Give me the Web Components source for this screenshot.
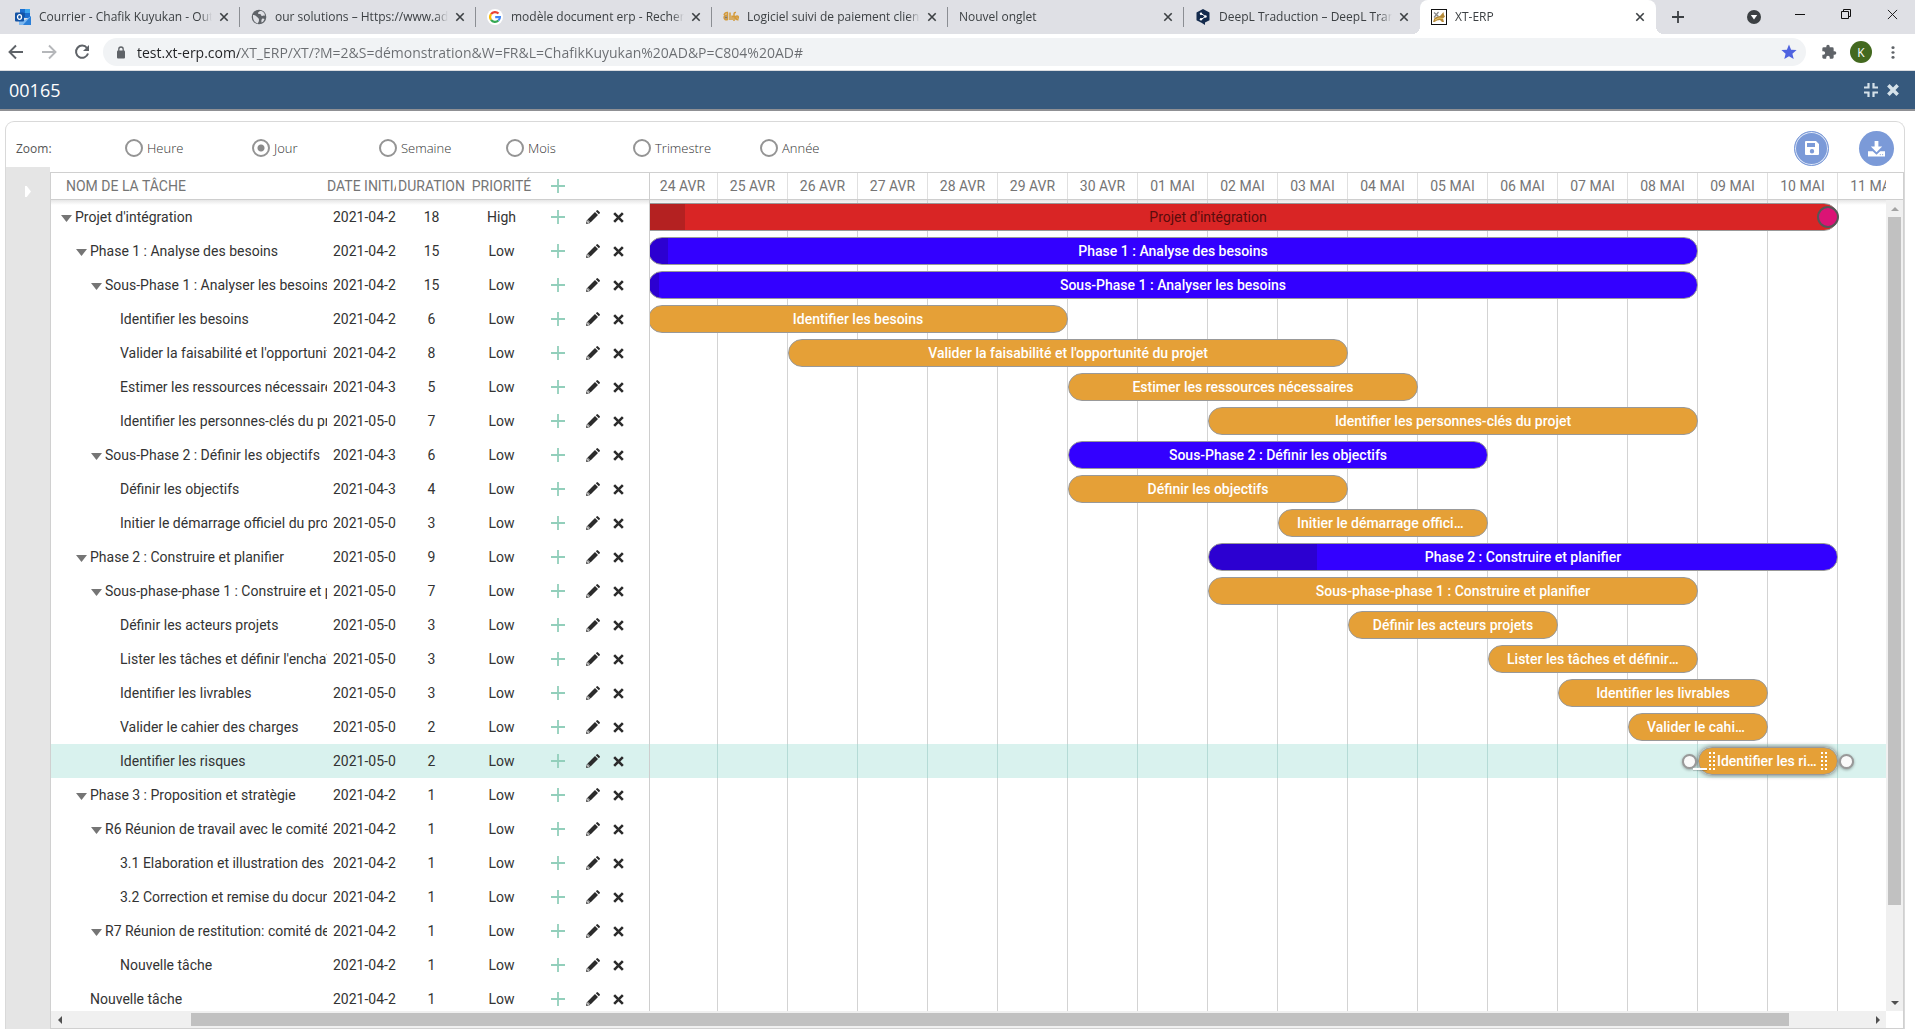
<!DOCTYPE html>
<html lang="fr">
<head>
<meta charset="utf-8">
<title>XT-ERP</title>
<style>
html,body{height:100%}
body{margin:0;display:flex;flex-direction:column;overflow:hidden;background:#fff;font-family:"Open Sans","Noto Sans",sans-serif;color:#333}
gantt-panel{flex:1;min-height:0}
</style>
</head>
<body>
<browser-tabs>
  <browser-tab icon="outlook">Courrier - Chafik Kuyukan - Outlook</browser-tab>
  <browser-tab icon="globe">our solutions – Https://www.adlesse.com</browser-tab>
  <browser-tab icon="google">modèle document erp - Recherche Google</browser-tab>
  <browser-tab icon="life">Logiciel suivi de paiement client, gestion</browser-tab>
  <browser-tab>Nouvel onglet</browser-tab>
  <browser-tab icon="deepl" last>DeepL Traduction – DeepL Translate</browser-tab>
  <browser-tab icon="xt" active>XT-ERP</browser-tab>
</browser-tabs>
<address-bar></address-bar>
<app-titlebar>00165</app-titlebar>
<gantt-panel>
  <zoom-bar slot="tools"></zoom-bar>
  <task-grid slot="grid"></task-grid>
  <task-timeline slot="timeline"></task-timeline>
</gantt-panel>

<script>
const ICONS = {
  outlook:['0 0 16 16','<path d="M5 0h10v9H5z" fill="#1b6fd0"/><path d="M10 0h5v4h-5z" fill="#3ba5ee"/><path d="M5 4h5v4H5z" fill="#1058a8"/><path d="M4 8l6 3 6-4v9H4z" fill="#7db8f0"/><path d="M16 7v9H8z" fill="#2a7fd8"/><rect y="3.500" width="9" height="9" rx="1" fill="#1253a5"/><ellipse cx="4.500" cy="8" rx="2" ry="2.300" fill="none" stroke="#fff" stroke-width="1.300"/>'],
  globe:['0 0 16 16','<circle cx="8" cy="8" r="7.300" fill="#5f6368"/><path d="M2 6c2 0 3 1 4 2s2 1 2 3-1 2-1 3.500C4 14 2 11 2 8zM9 2c-1 1-2 1-2 2s1 1 2 1 1 2 2 2 2-1 3 0c0-3-2-5-5-5zM11 10c1-1 2 0 2.500 0-.5 1.500-1.500 3-3 3.500 0-1.500-.5-2.500.5-3.500z" fill="#dfe0e5"/>'],
  google:['0 0 16 16','<circle cx="8" cy="8" r="8" fill="#fff"/><g fill="none" stroke-width="2.200"><path d="M4 5.200A4.900 4.900 0 0 1 11.500 4.600" stroke="#ea4335"/><path d="M4 5.200A4.900 4.900 0 0 0 4 10.800" stroke="#fbbc05"/><path d="M4 10.800A4.900 4.900 0 0 0 11.400 11.500" stroke="#34a853"/><path d="M11.400 11.500A4.900 4.900 0 0 0 12.900 8.200H8.200" stroke="#4285f4"/></g>'],
  life:['0 0 16 16','<g fill="none" stroke="#d49a3a" stroke-width="1.500"><path d="M4.500 6.500A2.300 2.300 0 1 0 4.500 10.500M4.500 3.500V11M1 6q1-3 4-2.500M7 3.500V11M9 6.500V11M11 12V5.500q0-2.500 2-2M9.500 7.500h3.500M12.500 9h3q0-2-1.500-2t-1.500 2 3 1.700"/></g><circle cx="3" cy="8.500" r="1.200" fill="#8a7a60"/>'],
  deepl:['0 0 16 16','<path d="M8 0l6.500 3.500v7.700L10 13.500V16l-3.500-2.300-5-2.500V3.500z" fill="#142b4d"/><path d="M6 4.500l4.500 3-4.500 3" fill="none" stroke="#fff"/><g fill="#fff"><circle cx="6" cy="4.700" r="1.200"/><circle cx="10.500" cy="7.500" r="1.200"/><circle cx="6" cy="10.300" r="1.200"/></g>'],
  xt:['0 0 16 16','<rect x=".5" y=".5" width="15" height="15" fill="#fff" stroke="#111"/><path d="M2 13l1.500-4L6 7.500 9 7l3.500-4 .5 3 1 1.500-2 2 1 3.500h-2l-2-2-3 .5L3.500 13z" fill="#b58a3a"/><path d="M3 3.500l4.500 4M7.500 3L3 8.500" stroke="#888" stroke-width="1.200"/><path d="M4 11l4-2 4 .5" stroke="#e8ca6e" fill="none"/>'],
  close:['0 0 10 10','<path d="M1.300 1.300l7.400 7.400M8.700 1.300L1.300 8.700" stroke="currentColor" stroke-width="1.600"/>'],
  thinclose:['0 0 12 12','<path d="M1 1l10 10M11 1L1 11" stroke="currentColor"/>'],
  newtab:['0 0 12 12','<path d="M6 0v12M0 6h12" stroke="currentColor" stroke-width="1.800"/>'],
  guest:['0 0 14 14','<circle cx="7" cy="7" r="7" fill="#3c4043"/><path d="M3.800 5h6.400L7 9.500z" fill="#fff"/>'],
  minimize:['0 0 12 12','<path d="M1 6.500h10" stroke="currentColor"/>'],
  restore:['0 0 12 12','<path d="M1.500 3.500h7v7h-7zM3.500 3.500v-2h7v7h-2" fill="none" stroke="currentColor"/>'],
  back:['0 0 16 16','<path d="M15 8H2M8 1.500L1.500 8 8 14.500" fill="none" stroke="currentColor" stroke-width="1.900"/>'],
  forward:['0 0 16 16','<path d="M1 8h13M8 1.500L14.500 8 8 14.500" fill="none" stroke="currentColor" stroke-width="1.900"/>'],
  reload:['0 0 16 16','<path d="M13 4A6.100 6.100 0 1 0 14 9.500" fill="none" stroke="currentColor" stroke-width="2"/><path d="M15 1v6H9z" fill="currentColor"/>'],
  lock:['0 0 10 13','<rect x="1" y="4.500" width="8" height="8" rx="1" fill="currentColor"/><path d="M2.800 5V3.200a2.200 2.200 0 0 1 4.400 0V5" fill="none" stroke="currentColor" stroke-width="1.300"/>'],
  star:['0 0 16 16','<path d="M8 .6l2.100 5.100 5.500.4-4.200 3.600 1.300 5.400L8 12.200l-4.700 2.900 1.300-5.400L.4 6.100l5.500-.4z" fill="currentColor"/>'],
  puzzle:['0 0 24 24','<path d="M20.500 11H19V7a2 2 0 0 0-2-2h-4V3.500a2.500 2.500 0 0 0-5 0V5H4a2 2 0 0 0-2 2v3.800h1.500a2.700 2.700 0 0 1 0 5.400H2V20c0 1.100.9 2 2 2h3.800v-1.500a2.700 2.700 0 0 1 5.400 0V22H17a2 2 0 0 0 2-2v-4h1.500a2.500 2.500 0 0 0 0-5z" fill="currentColor"/>'],
  dots:['0 0 4 16','<circle cx="2" cy="2" r="1.600"/><circle cx="2" cy="8" r="1.600"/><circle cx="2" cy="14" r="1.600"/>'],
  compress:['0 0 16 16','<path d="M5.500 1v4.500H1M10.500 1v4.500H15M5.500 15v-4.500H1M10.500 15v-4.500H15" fill="none" stroke="currentColor" stroke-width="2.200"/>'],
  times:['0 0 12 12','<path d="M2 2l8 8M10 2l-8 8" stroke="currentColor" stroke-width="3"/>'],
  cross:['0 0 12 12','<path d="M2 2l8 8M10 2l-8 8" stroke="currentColor" stroke-width="2.400"/>'],
  plus:['0 0 14 14','<path d="M7 0v14M0 7h14" stroke="currentColor" stroke-width="1.800"/>'],
  pencil:['0 0 14 14','<path d="M9.800 1.200l3 3 .8-.8q.7-.7 0-1.400L12 .4q-.7-.7-1.400 0zM9 2l3 3-7.500 7.500-3-3z" fill="currentColor"/><path d="M1.300 10L.4 13.600 4 12.700z" fill="#fff" stroke="currentColor" stroke-width=".7"/><path d="M.4 13.600l.4-1.500 1.100 1.100z" fill="currentColor"/>'],
  caret:['0 0 11 7','<path d="M0 0h11L5.500 7z" fill="currentColor"/>'],
  side:['0 0 7 12','<path d="M0 0l2 0 5 6-5 6-2 0z" fill="currentColor"/>'],
  save:['0 0 16 16','<path fill-rule="evenodd" d="M2 1h10l3 3v10a1 1 0 0 1-1 1H2a1 1 0 0 1-1-1V2a1 1 0 0 1 1-1zm1 2v4h8V3zm5 6a2.200 2.200 0 1 0 0 4.400A2.200 2.200 0 0 0 8 9z" fill="currentColor"/>'],
  download:['0 0 18 18','<path d="M7 1h4v6h4l-6 6-6-6h4z" fill="currentColor"/><path d="M0 12h5l4 3.500 4-3.500h5v5.500H0z" fill="currentColor"/><path d="M12.500 15.500h1M15 15.500h1" stroke="#7b9ad8"/>'],
  up:['0 0 8 5','<path d="M0 5l4-5 4 5z" fill="currentColor"/>'],
  down:['0 0 8 5','<path d="M0 0l4 5 4-5z" fill="currentColor"/>'],
  left:['0 0 5 8','<path d="M5 0L0 4l5 4z" fill="currentColor"/>'],
  right:['0 0 5 8','<path d="M0 0l5 4-5 4z" fill="currentColor"/>']
};

class Base extends HTMLElement{
  connectedCallback(){
    if(this.shadowRoot) return;
    this.attachShadow({mode:'open'}).innerHTML =
      `<style>*{box-sizing:border-box}button{border:0;padding:0;margin:0;background:none;color:inherit;font:inherit;display:inline-flex;align-items:center;justify-content:center;cursor:pointer}${this.css()}</style>${this.html()}`;
  }
}

customElements.define('ui-icon', class extends Base{
  css(){return `:host{display:inline-flex;flex:none}svg{display:block;width:${this.getAttribute('w')||16}px;height:${this.getAttribute('h')||this.getAttribute('w')||16}px}`}
  html(){const [box,body]=ICONS[this.getAttribute('name')];return `<svg viewBox="${box}" fill="currentColor" preserveAspectRatio="none" aria-hidden="true">${body}</svg>`}
});

customElements.define('browser-tabs', class extends Base{
  css(){return `
    :host{display:flex;height:34px;background:#dfe0e5;padding-left:4px;color:#3c4043}
    .end{display:flex;flex:1;justify-content:space-between}
    .new{width:44px}
    .win{display:flex}
    .win button{width:46px;height:28px;color:#111}
    .win .guest{height:34px}`}
  html(){return `<slot></slot><div class="end"><button class="new" aria-label="Nouvel onglet"><ui-icon name="newtab" w="12"></ui-icon></button>
    <div class="win"><button class="guest" aria-label="Rechercher"><ui-icon name="guest" w="14"></ui-icon></button><button aria-label="Réduire"><ui-icon name="minimize" w="12"></ui-icon></button><button aria-label="Restaurer"><ui-icon name="restore" w="12"></ui-icon></button><button aria-label="Fermer"><ui-icon name="thinclose" w="11"></ui-icon></button></div></div>`}
});

customElements.define('browser-tab', class extends Base{
  css(){return `
    :host{display:flex;align-items:center;width:236px;flex:0 1 236px;min-width:0;padding:0 8px 0 11px;box-sizing:border-box;position:relative;font-size:12px}
    :host(:not([active]):not([last]))::after{content:"";position:absolute;right:0;top:7px;height:20px;width:1px;background:#8b8e93}
    :host([active]){background:#fff;border-radius:8px 8px 0 0}
    :host([active])::before,:host([active])::after{content:"";position:absolute;bottom:0;width:8px;height:8px}
    :host([active])::before{left:-8px;background:radial-gradient(circle at 0 0,#0000 8px,#fff 8px)}
    :host([active])::after{right:-8px;background:radial-gradient(circle at 100% 0,#0000 8px,#fff 8px)}
    ui-icon{margin-right:8px}
    .t{flex:1;min-width:0;overflow:hidden;white-space:nowrap;line-height:20px;-webkit-mask-image:linear-gradient(90deg,#000 calc(100% - 12px),#0000)}
    button{width:16px;height:16px;margin-left:4px}button ui-icon{margin:0}`}
  html(){const i=this.getAttribute('icon');return `${i?`<ui-icon name="${i}" w="16"></ui-icon>`:''}<span class="t"><slot></slot></span><button aria-label="Fermer l'onglet"><ui-icon name="close" w="10"></ui-icon></button>`}
});

customElements.define('address-bar', class extends Base{
  css(){return `
    :host{display:flex;align-items:center;height:37px;box-sizing:border-box;border-bottom:1px solid #dadce0;padding:0 14px 0 8px;color:#5f6368}
    .nav{display:flex;width:95px;gap:17px;align-items:center}
    .fwd{color:#b5b7ba}
    .box{flex:1;display:flex;align-items:center;height:28px;border-radius:14px;background:#f1f3f5;padding:0 9px 0 13px;min-width:0}
    input{flex:1;min-width:0;margin:0 0 0 11px;padding:0;border:0;outline:0;height:28px;font:14px "Open Sans","Noto Sans",sans-serif;color:#5f6368;background:linear-gradient(90deg,#202124 102px,#6a6d71 102px);-webkit-background-clip:text;background-clip:text;-webkit-text-fill-color:#0000}
    .star{color:#4f63e0}
    .right{display:flex;align-items:center;margin-left:15px}
    .k{width:22px;height:22px;border-radius:11px;background:#43691f;color:#fff;font-size:12px;margin:0 13px 0 13px}
    .menu{width:16px}`}
  html(){return `<div class="nav"><button aria-label="Précédent"><ui-icon name="back" w="16"></ui-icon></button><button class="fwd" aria-label="Suivant"><ui-icon name="forward" w="16"></ui-icon></button><button aria-label="Actualiser"><ui-icon name="reload" w="16"></ui-icon></button></div>
    <div class="box"><ui-icon name="lock" w="10" h="13"></ui-icon><input type="text" aria-label="Adresse" value="test.xt-erp.com/XT_ERP/XT/?M=2&amp;S=démonstration&amp;W=FR&amp;L=ChafikKuyukan%20AD&amp;P=C804%20AD#"><button class="star" aria-label="Favori"><ui-icon name="star" w="16"></ui-icon></button></div>
    <div class="right"><button aria-label="Extensions"><ui-icon name="puzzle" w="16"></ui-icon></button><button class="k">K</button><button class="menu" aria-label="Menu"><ui-icon name="dots" w="4" h="13"></ui-icon></button></div>`}
});

customElements.define('app-titlebar', class extends Base{
  css(){return `
    :host{display:flex;align-items:center;justify-content:space-between;height:40px;box-sizing:border-box;background:#36597d;border-bottom:2px solid #8f9094;padding:0 15px 0 9px;color:#fff;font-size:18px;line-height:24px}
    .a{display:flex;align-items:center;gap:7px;color:#d5e2ea}`}
  html(){return `<slot></slot><div class="a"><button aria-label="Réduire"><ui-icon name="compress" w="16"></ui-icon></button><button aria-label="Fermer"><ui-icon name="times" w="14"></ui-icon></button></div>`}
});

customElements.define('gantt-panel', class extends Base{
  css(){return `
    :host{display:flex;flex-direction:column;margin:10px 10px 0 5px;border:1px solid #d9d9d9;border-bottom:0;border-radius:9px 9px 0 0;box-sizing:border-box;min-width:0}
    .body{flex:1;display:flex;min-height:0}
    .side{flex:none;width:44px;background:#e5e5e5;color:#fff;display:flex;justify-content:center;align-items:flex-start}
    .side button{height:48px;width:44px}
    .gantt{flex:1;min-width:0;display:flex;flex-direction:column;margin-top:5px;border:1px solid #d0d0d0}
    .main{flex:1;display:flex;min-height:0;overflow:hidden}
    ::slotted(task-timeline){flex:1}
    .vs{flex:none;width:17px;display:flex;flex-direction:column;color:#505050}
    .vh{height:27px;border-bottom:1px solid #cecece}
    .bar{flex:1;min-height:0;display:flex;flex-direction:column;background:#f0f0f0}
    .bar button{height:17px}
    .bar button:first-child{color:#a3a3a3}
    .track{flex:1;min-height:0;padding:0 2px}
    .track i{display:block;height:88.500%;background:#c1c1c1}
    .hs{flex:none;height:17px;display:flex;background:#f0f0f0;color:#505050;margin-right:17px}
    .hs button{width:17px}
    .hs .track{padding:2px 0}
    .hs .track i{height:13px;width:88.700%;margin-left:6.850%}`}
  html(){return `<slot name="tools"></slot><div class="body"><div class="side"><button aria-label="Déplier"><ui-icon name="side" w="6" h="11"></ui-icon></button></div>
    <div class="gantt"><div class="main"><slot name="grid"></slot><slot name="timeline"></slot>
      <div class="vs"><div class="vh"></div><div class="bar"><button aria-label="Haut"><ui-icon name="up" w="8" h="4"></ui-icon></button><div class="track"><i></i></div><button aria-label="Bas"><ui-icon name="down" w="8" h="4"></ui-icon></button></div></div></div>
      <div class="hs"><button aria-label="Gauche"><ui-icon name="left" w="4" h="8"></ui-icon></button><div class="track"><i></i></div><button aria-label="Droite"><ui-icon name="right" w="4" h="8"></ui-icon></button></div>
    </div></div>`}
});

customElements.define('zoom-bar', class extends Base{
  css(){return `
    :host{display:flex;justify-content:space-between;align-items:center;height:45px;padding:7px 10px 0 10px;box-sizing:border-box;font-size:13px;color:#333}
    fieldset{border:0;margin:0;padding:0;display:flex;align-items:center}
    .z{width:109px;color:#555;font-size:12px}
    label{width:127px;display:flex;align-items:center;gap:4px;font-weight:300;line-height:18px}
    input{appearance:none;margin:0;width:18px;height:18px;border:2px solid #949494;border-radius:9px;background:#fff}
    input:checked{background:radial-gradient(circle,#8a8a8a 3px,#fff 4px)}
    .b{display:flex;gap:30px}
    .b button{width:35px;height:35px;border-radius:18px;background:#7b9ad8;color:#fff}
    .b .s{border:1px solid #7b9ad8;box-shadow:inset 0 0 0 1px #e4ebf8}`}
  html(){return `<fieldset><span class="z" id="z">Zoom:</span>${['Heure','Jour','Semaine','Mois','Trimestre','Année'].map((l,i)=>`<label for="r${i}"><input type="radio" name="scale" id="r${i}"${i==1?' checked':''}>${l}</label>`).join('')}</fieldset>
    <div class="b"><button class="s" aria-label="Enregistrer"><ui-icon name="save" w="16"></ui-icon></button><button aria-label="Télécharger"><ui-icon name="download" w="17"></ui-icon></button></div>`}
});

/* level, has children, name, start date, duration, first day column, colour, progress px */
const TASKS=[
 [0,1,"Projet d'intégration","2021-04-23",18,1,'red',107],
 [1,1,"Phase 1 : Analyse des besoins","2021-04-24",15,2,'blue',20],
 [2,1,"Sous-Phase 1 : Analyser les besoins","2021-04-24",15,2,'blue',11],
 [3,0,"Identifier les besoins","2021-04-24",6,2,'gold'],
 [3,0,"Valider la faisabilité et l'opportunité du projet","2021-04-26",8,4,'gold'],
 [3,0,"Estimer les ressources nécessaires","2021-04-30",5,8,'gold'],
 [3,0,"Identifier les personnes-clés du projet","2021-05-02",7,10,'gold'],
 [2,1,"Sous-Phase 2 : Définir les objectifs","2021-04-30",6,8,'blue'],
 [3,0,"Définir les objectifs","2021-04-30",4,8,'gold'],
 [3,0,"Initier le démarrage officiel du projet","2021-05-03",3,11,'gold'],
 [1,1,"Phase 2 : Construire et planifier","2021-05-02",9,10,'blue',109],
 [2,1,"Sous-phase-phase 1 : Construire et planifier","2021-05-02",7,10,'gold'],
 [3,0,"Définir les acteurs projets","2021-05-04",3,12,'gold'],
 [3,0,"Lister les tâches et définir l'enchaînement","2021-05-06",3,14,'gold'],
 [3,0,"Identifier les livrables","2021-05-07",3,15,'gold'],
 [3,0,"Valider le cahier des charges","2021-05-08",2,16,'gold'],
 [3,0,"Identifier les risques","2021-05-09",2,17,'gold',0,1],
 [1,1,"Phase 3 : Proposition et stratègie","2021-04-23",1],
 [2,1,"R6 Réunion de travail avec le comité","2021-04-23",1],
 [3,0,"3.1 Elaboration et illustration des","2021-04-23",1],
 [3,0,"3.2 Correction et remise du document","2021-04-23",1],
 [2,1,"R7 Réunion de restitution: comité de","2021-04-23",1],
 [3,0,"Nouvelle tâche","2021-04-23",1],
 [1,0,"Nouvelle tâche","2021-04-23",1]
];

customElements.define('task-grid', class extends Base{
  css(){return `
    :host{display:block;flex:none;width:599px;border-right:1px solid #cecece;box-sizing:border-box;font-family:Roboto,sans-serif;font-size:14px}
    table{border-collapse:separate;border-spacing:0;table-layout:fixed;width:598px;color:#333}
    th,td{padding:0;text-align:center;font-weight:400;overflow:hidden;white-space:nowrap}
    th{height:27px;line-height:26px;border-bottom:1px solid #cecece;color:#757575}
    td{height:34px;line-height:34px}
    th.n{text-align:left;padding-left:15px}
    th.d{text-align:left}
    td.d{text-align:left;padding-left:6px}
    td.n{text-align:left;padding-left:calc(6px + var(--l)*15px)}
    .n button,.n i{display:inline-flex;width:18px;height:12px;color:#757575;vertical-align:middle}
    td button,th button{vertical-align:middle}
    .add,.ic{font-size:0}
    th.add,.add{color:#92cfbb}
    .ic{color:#2b2b2b}
    tbody tr:first-child{background:linear-gradient(#e6e6e6,#fff 5px)}
    tr.sel{background:#d9f2ee}`}
  html(){return `<table><colgroup><col style="width:276px"><col style="width:69px"><col style="width:71px"><col style="width:69px"><col style="width:44px"><col style="width:26px"><col style="width:24px"><col></colgroup>
    <thead><tr><th class="n">NOM DE LA TÂCHE</th><th class="d">DATE INITIALE</th><th>DURATION</th><th>PRIORITÉ</th><th class="add"><button aria-label="Ajouter"><ui-icon name="plus" w="14"></ui-icon></button></th><th></th><th></th><th></th></tr></thead>
    <tbody>${TASKS.map((t,i)=>`<tr${t[8]?' class="sel"':''}><td class="n" style="--l:${t[0]}">${t[1]?'<button aria-label="Replier"><ui-icon name="caret" w="11" h="7"></ui-icon></button>':'<i></i>'}${t[2]}</td><td class="d">${t[3]}</td><td>${t[4]}</td><td>${i?'Low':'High'}</td><td class="add"><button aria-label="Ajouter"><ui-icon name="plus" w="14"></ui-icon></button></td><td class="ic"><button aria-label="Modifier"><ui-icon name="pencil" w="14"></ui-icon></button></td><td class="ic"><button aria-label="Supprimer"><ui-icon name="cross" w="13"></ui-icon></button></td><td></td></tr>`).join('')}</tbody></table>`}
});

customElements.define('task-timeline', class extends Base{
  css(){return `
    :host{display:block;min-width:0;overflow:hidden;font-family:Roboto,sans-serif;font-size:14px}
    .head,.row{display:grid;grid-template-columns:repeat(19,70px);width:1330px;margin-left:-72px}
    .head{height:27px;line-height:26px;border-bottom:1px solid #cecece;color:#757575}
    .head span{text-align:center;border-right:1px solid #e0e0e0}
    .head span:first-child{grid-column:2}
    .row{height:34px;align-items:center;--line:#d3d3d3;background:repeating-linear-gradient(90deg,#0000 0 69px,var(--line) 69px 70px)}
    .row.first{background:repeating-linear-gradient(90deg,#0000 0 69px,var(--line) 69px 70px),linear-gradient(#e6e6e6,#fff 5px)}
    .row.sel{--line:#b5dbd6;background-color:#d9f2ee}
    task-bar{min-width:0}`}
  html(){
    const days=[];for(let d=24;d<=30;d++)days.push(d+' AVR');for(let d=1;d<=11;d++)days.push(String(d).padStart(2,'0')+' MAI');
    return `<div class="head">${days.map(d=>`<span>${d}</span>`).join('')}</div>${TASKS.map((t,i)=>`<div class="row${i?'':' first'}${t[8]?' sel':''}">${t[5]?`<task-bar tone="${t[6]}" done="${t[7]||0}"${t[8]?' selected':''} style="grid-column:${t[5]}/span ${t[4]}">${t[2]}</task-bar>`:''}</div>`).join('')}`}
});

customElements.define('task-bar', class extends Base{
  css(){return `
    :host{display:block;position:relative;height:28px;box-sizing:border-box;border:1px solid #999;border-radius:14px;background:linear-gradient(90deg,var(--d) ${this.getAttribute('done')-1}px,var(--c) ${this.getAttribute('done')-1}px);color:#fff;font-weight:500;text-align:center;line-height:26px;padding:0 18px}
    :host([tone=red]){--c:#d92525;--d:#b42121;color:#5a0c0c;font-weight:400}
    :host([tone=blue]){--c:#3300ff;--d:#2c00d1}
    :host([tone=gold]){--c:#e5a037;--d:#e5a037}
    :host([selected]){box-shadow:0 0 5px #666}
    .t{display:block;overflow:hidden;white-space:nowrap;text-overflow:ellipsis}
    .ms{position:absolute;right:-2px;top:2px;width:22px;height:22px;border:2px solid #565656;border-radius:11px;background:#db1375}
    .h{position:absolute;top:6px;width:15px;height:15px;border:2px solid #999;border-radius:8px;background:#fafafa;box-shadow:0 1px 3px #0005}
    .h.l{left:-17px}.h.r{right:-17px}
    .g{position:absolute;top:4px;width:6px;height:18px;background:repeating-linear-gradient(90deg,#fff 0 2px,#0000 2px 4px);-webkit-mask-image:repeating-linear-gradient(#000 0 2px,#0000 2px 4px)}
    .g.l{left:10px}.g.r{right:10px}
    .u{position:absolute;left:-6px;top:20px;width:14px;height:2px;background:#fff;box-shadow:0 1px 1px #0003}`}
  html(){return `<span class="t"><slot></slot></span>${this.getAttribute('tone')=='red'?'<i class="ms"></i>':''}${this.hasAttribute('selected')?'<i class="g l"></i><i class="g r"></i><i class="h l"></i><i class="h r"></i><i class="u"></i>':''}`}
});
</script>
</body>
</html>
